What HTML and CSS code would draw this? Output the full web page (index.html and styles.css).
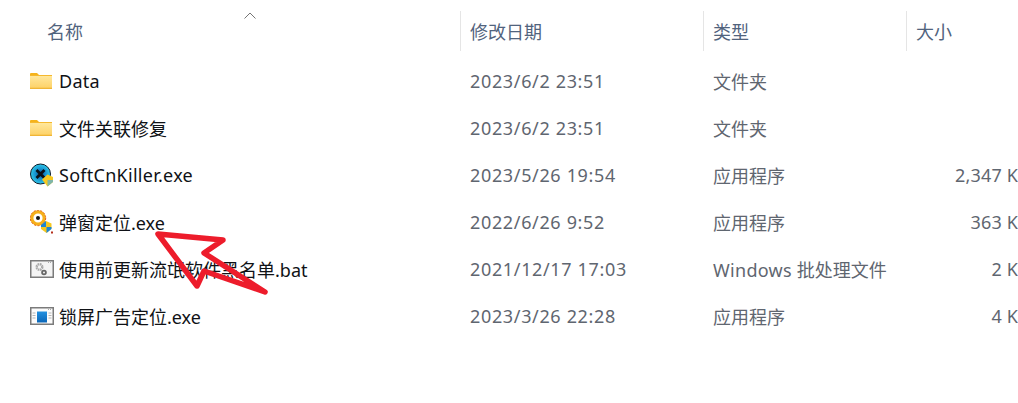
FILE: index.html
```html
<!DOCTYPE html>
<html lang="zh-CN">
<head>
<meta charset="utf-8">
<title>文件列表</title>
<link rel="stylesheet" href="styles.css">
</head>
<body>
<div class="explorer">
  <div class="header">
    <div class="hcell name">名称<svg class="sort" viewBox="0 0 12 7" width="12" height="7"><path d="M.5 6.500 6 1l5.500 5.500" fill="none" stroke="#757575" stroke-width="1"/></svg></div>
    <div class="hcell">修改日期</div>
    <div class="hcell">类型</div>
    <div class="hcell">大小</div>
  </div>

  <div class="rows">
    <div class="row">
      <div class="fname"><svg class="icon" viewBox="0 0 22 17" width="22" height="17"><defs><linearGradient id="fg" x1="0" y1="0" x2="0" y2="1"><stop offset="0" stop-color="#ffe79c"/><stop offset="1" stop-color="#fdd268"/></linearGradient></defs><path d="M0 2a1 1 0 0 1 1-1h6l2 2v2H0z" fill="#f5b31b"/><path d="M0 3h22v13.500H0z" fill="#f5b82e"/><path d="M0 4h22v12H0z" fill="url(#fg)"/><path d="M0 15.800h22v1H0z" fill="#eeac1e"/></svg><span class="latin">Data</span></div>
      <div class="date">2023/6/2 23:51</div><div class="type">文件夹</div><div class="size"></div>
    </div>
    <div class="row">
      <div class="fname"><svg class="icon" viewBox="0 0 22 17" width="22" height="17"><path d="M0 2a1 1 0 0 1 1-1h6l2 2v2H0z" fill="#f5b31b"/><path d="M0 3h22v13.500H0z" fill="#f5b82e"/><path d="M0 4h22v12H0z" fill="url(#fg)"/><path d="M0 15.800h22v1H0z" fill="#eeac1e"/></svg><span>文件关联修复</span></div>
      <div class="date">2023/6/2 23:51</div><div class="type">文件夹</div><div class="size"></div>
    </div>
    <div class="row">
      <div class="fname"><svg class="icon" viewBox="0 0 24 24" width="24" height="24"><defs><radialGradient id="blue"><stop offset="0" stop-color="#064a8c"/><stop offset=".5" stop-color="#1590cf"/><stop offset="1" stop-color="#2fc8e8"/></radialGradient></defs><circle cx="10.500" cy="11" r="10" fill="url(#blue)" stroke="#0b1a2a" stroke-width="1"/><path d="M6.500 7l8 8M14.500 7l-8 8" stroke="#0a0f16" stroke-width="2.800"/><path d="M12 16.500l5.500-5 5.500 2.500v5l-5.500 4.500z" fill="#f6c81f"/><path d="M17.500 17H23v2l-5.500 4.500z" fill="#7fb6a8"/></svg><span class="latin">SoftCnKiller.exe</span></div>
      <div class="date">2023/5/26 19:54</div><div class="type">应用程序</div><div class="size">2,347 K</div>
    </div>
    <div class="row">
      <div class="fname"><svg class="icon" viewBox="0 0 24 24" width="24" height="24"><circle cx="8" cy="8" r="6.200" fill="#fff" stroke="#f6b01a" stroke-width="3.200"/><circle cx="8" cy="8" r="7.700" fill="none" stroke="#e2611a" stroke-width="1" stroke-dasharray="2 1.500"/><circle cx="8" cy="8" r="2" fill="#141414"/><path d="M11 15l5-4 5.500 2.500v5L16.500 23 11 19z" fill="#f6c81f"/><path d="M11 15l5-4v6h-5zM16.500 17h5v2l-5 4z" fill="#1e86d2"/><path d="M21 21.500h2v2h-2z" fill="#b5301c"/></svg><span>弹窗定位.exe</span></div>
      <div class="date">2022/6/26 9:52</div><div class="type">应用程序</div><div class="size">363 K</div>
    </div>
    <div class="row">
      <div class="fname"><svg class="icon" viewBox="0 0 24 18" width="24" height="18"><path d="M.75.75h22.500v16.500H.75z" fill="#f4f4f4" stroke="#7b7b7b" stroke-width="1.500"/><path d="M18 2.500h1M20 2.500h1" stroke="#aaa" stroke-width="1"/><circle cx="9.500" cy="7" r="2.800" fill="none" stroke="#a9a9a9" stroke-width="2.400" stroke-dasharray="1.600 .6"/><circle cx="14" cy="12.500" r="1.900" fill="none" stroke="#666" stroke-width="1.800"/></svg><span>使用前更新流氓软件黑名单.bat</span></div>
      <div class="date">2021/12/17 17:03</div><div class="type"><span class="win">Windows</span> 批处理文件</div><div class="size">2 K</div>
    </div>
    <div class="row">
      <div class="fname"><svg class="icon" viewBox="0 0 24 18" width="24" height="18"><defs><linearGradient id="sq" x1="0" y1="0" x2="0" y2="1"><stop offset="0" stop-color="#2291e0"/><stop offset="1" stop-color="#0a66b8"/></linearGradient></defs><path d="M.75.75h22.500v16.500H.75z" fill="#fbfbfb" stroke="#7b7b7b" stroke-width="1.500"/><path d="M18 2.500h1M20 2.500h1" stroke="#aaa" stroke-width="1"/><path d="M7 4.500h10v11H7z" fill="url(#sq)"/><path d="M2.500 6h3M2.500 8.500h3M2.500 11h3M18.500 6h3M18.500 8.500h3M18.500 11h3" stroke="#b5b5b5" stroke-width="1"/></svg><span>锁屏广告定位.exe</span></div>
      <div class="date">2023/3/26 22:28</div><div class="type">应用程序</div><div class="size">4 K</div>
    </div>
  </div>

  <svg class="arrow" viewBox="0 0 1018 403" width="1018" height="403"><path d="M158 234 223 240 204 253 265 292 204 271 197 286Z" fill="none" stroke="#ed1c2b" stroke-width="5.500" stroke-linejoin="round" stroke-linecap="round"/></svg>
</div>
</body>
</html>
```
FILE: styles.css
```css
html, body {
  margin: 0;
  padding: 0;
  background: #fff;
}

.explorer {
  position: relative;
  width: 1018px;
  height: 403px;
  overflow: hidden;
  font-family: "Noto Sans", "Noto Sans CJK SC", sans-serif;
  font-size: 18px;
  color: #5f6670;
}

.header {
  display: grid;
  grid-template-columns: 460px 243px 203px 112px;
  height: 40px;
  margin-top: 11px;
  color: #51637d;
}

.hcell {
  display: flex;
  align-items: center;
  padding-left: 9px;
  border-left: 1px solid #e5e5e5;
  box-sizing: border-box;
}

.hcell.name {
  position: relative;
  border-left: 0;
  padding-left: 47px;
}

.sort {
  position: absolute;
  left: 244px;
  top: 1px;
}

.rows {
  margin-top: 6px;
}

.row {
  display: grid;
  grid-template-columns: 460px 243px 203px 112px;
  height: 47px;
  align-items: center;
}

.date {
  padding-left: 10px;
  letter-spacing: 0.65px;
}

.type {
  padding-left: 10px;
}

.win {
  letter-spacing: 0.3px;
}

.size {
  text-align: right;
  white-space: nowrap;
  letter-spacing: 0.15px;
}

.fname {
  display: flex;
  align-items: center;
  gap: 7px;
  padding-left: 30px;
  color: #0f1216;
}

.fname span {
  white-space: nowrap;
}

.fname .icon {
  flex: none;
  margin-right: -2px;
}

.fname .icon[width="22"] {
  margin-right: 0;
}

.latin {
  letter-spacing: 0.27px;
}

.arrow {
  position: absolute;
  left: 0;
  top: 0;
  pointer-events: none;
}
```
